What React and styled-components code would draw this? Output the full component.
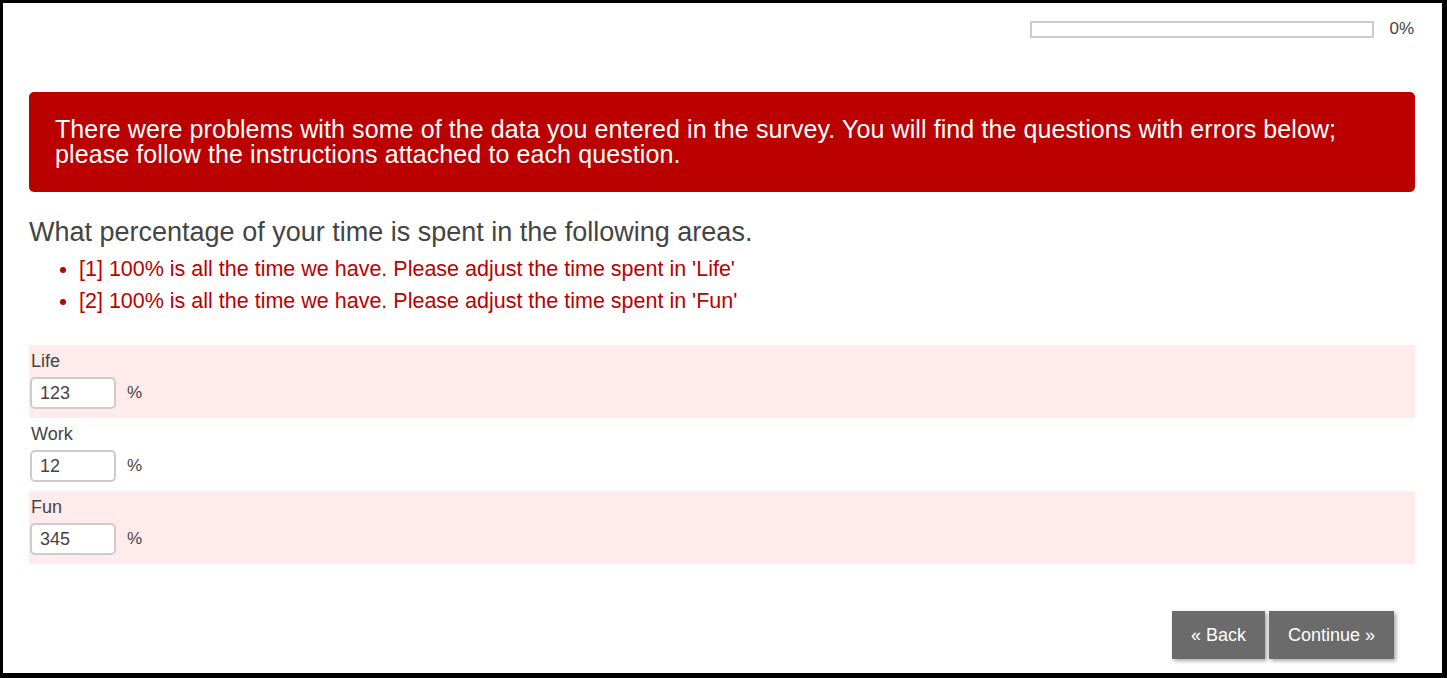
import React from 'react';
import styled, { createGlobalStyle } from 'styled-components';

const GlobalStyle = createGlobalStyle`
  html, body {
    margin: 0;
    padding: 0;
    background: #ffffff;
  }
  body {
    font-family: 'Liberation Sans', Arial, sans-serif;
    color: #444;
  }
`;

const Frame = styled.div`
  box-sizing: border-box;
  height: 678px;
  border-style: solid;
  border-color: #000;
  border-width: 3px 5px 5px 3px;
  padding: 0 27px 0 26px;
  display: flex;
  flex-direction: column;
`;

const ProgressRow = styled.div`
  display: flex;
  justify-content: flex-end;
  align-items: center;
  gap: 15px;
  margin-top: 16px;
`;

const ProgressTrack = styled.div`
  box-sizing: border-box;
  width: 344px;
  height: 17px;
  border: 2px solid #cccccc;
  background: #fff;
`;

const ProgressFill = styled.div`
  height: 100%;
  background: #bb0000;
`;

const ProgressLabel = styled.span`
  font-size: 17px;
  color: #444;
  padding-right: 1px;
`;

const ErrorBanner = styled.div`
  margin-top: 53px;
  background: #bb0000;
  color: #fff;
  border-radius: 5px;
  padding: 25px 26px;
  font-size: 25px;
  line-height: 25px;
  letter-spacing: 0.1px;
`;

const Question = styled.h2`
  margin: 25px 0 0;
  font-size: 27px;
  font-weight: normal;
  line-height: 30px;
  color: #444;
`;

const ErrorList = styled.ul`
  margin: 6px 0 0;
  padding-left: 50px;
  color: #bb0000;
  font-size: 21.5px;
  line-height: 32px;
`;

const FieldList = styled.div`
  margin-top: 28px;
  display: flex;
  flex-direction: column;
`;

const FieldRow = styled.div`
  background: ${(p) => (p.$error ? '#ffebeb' : 'transparent')};
  padding: 5px 1px 9px;
  display: flex;
  flex-direction: column;
  gap: 5px;
`;

const FieldLabel = styled.label`
  font-size: 18px;
  line-height: 22px;
  color: #444;
  padding-left: 1px;
`;

const InputLine = styled.div`
  display: flex;
  align-items: center;
  gap: 11px;
`;

const NumberInput = styled.input`
  box-sizing: border-box;
  width: 86px;
  height: 32px;
  border: 2px solid #cccccc;
  border-radius: 5px;
  padding: 0 8px;
  font-family: 'Liberation Sans', Arial, sans-serif;
  font-size: 18px;
  color: #444;
  background: #fff;
  outline: none;
`;

const Unit = styled.span`
  font-size: 17px;
  color: #444;
`;

const Nav = styled.div`
  margin-top: 47px;
  margin-right: 21px;
  display: flex;
  justify-content: flex-end;
  gap: 4px;
`;

const NavButton = styled.button`
  height: 48px;
  padding: 0 19px;
  border: none;
  background: #6b6b6b;
  color: #fff;
  font-family: 'Liberation Sans', Arial, sans-serif;
  font-size: 18px;
  cursor: pointer;
  box-shadow: 2px 2px 4px rgba(0, 0, 0, 0.35);
`;

const fields = [
  { name: 'Life', value: '123', error: true },
  { name: 'Work', value: '12', error: false },
  { name: 'Fun', value: '345', error: true },
];

const errors = [
  "[1] 100% is all the time we have. Please adjust the time spent in 'Life'",
  "[2] 100% is all the time we have. Please adjust the time spent in 'Fun'",
];

const App = () => {
  const progress = 0;

  return (
    <>
      <GlobalStyle />
      <Frame>
        <ProgressRow>
          <ProgressTrack>
            <ProgressFill style={{ width: `${progress}%` }} />
          </ProgressTrack>
          <ProgressLabel>{progress}%</ProgressLabel>
        </ProgressRow>

        <ErrorBanner>
          There were problems with some of the data you entered in the survey. You will find the
          questions with errors below; please follow the instructions attached to each question.
        </ErrorBanner>

        <Question>What percentage of your time is spent in the following areas.</Question>
        <ErrorList>
          {errors.map((e) => (
            <li key={e}>{e}</li>
          ))}
        </ErrorList>

        <FieldList>
          {fields.map((f) => (
            <FieldRow key={f.name} $error={f.error}>
              <FieldLabel htmlFor={`f-${f.name}`}>{f.name}</FieldLabel>
              <InputLine>
                <NumberInput id={`f-${f.name}`} defaultValue={f.value} />
                <Unit>%</Unit>
              </InputLine>
            </FieldRow>
          ))}
        </FieldList>

        <Nav>
          <NavButton>« Back</NavButton>
          <NavButton>Continue »</NavButton>
        </Nav>
      </Frame>
    </>
  );
};

export default App;
